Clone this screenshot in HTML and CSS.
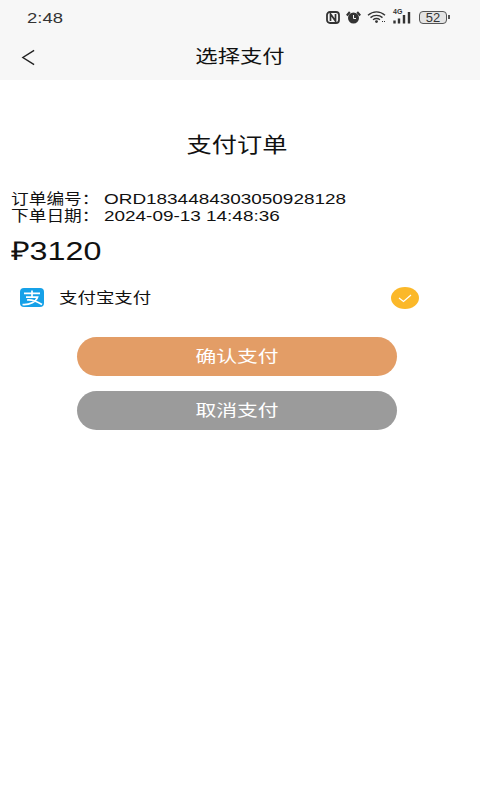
FILE: index.html
```html
<!DOCTYPE html>
<html lang="zh">
<head>
<meta charset="utf-8">
<title>选择支付</title>
<link rel="stylesheet" href="styles.css">
</head>
<body>
<div class="top">
  <div class="status">
    <span class="time wide">2:48</span>
    <div class="status-icons">
      <svg class="i-nfc" viewBox="0 0 14 13"><rect x="1" y="1" width="12" height="11" rx="3" fill="none" stroke="#333" stroke-width="1.800"/><path d="M4.500 10V3L9.500 10V3" fill="none" stroke="#333" stroke-width="1.700"/></svg>
      <svg class="i-alarm" viewBox="0 0 15 13"><circle cx="7.500" cy="7" r="5.500" fill="#333"/><path d="M0.800 4.500L3.800 1M14.200 4.500L11.200 1" stroke="#333" stroke-width="2"/><path d="M7.500 4V7.500H10" stroke="#f7f7f7" stroke-width="1" fill="none"/></svg>
      <svg class="i-wifi" viewBox="0 0 20 12"><path d="M1 4.200C6 -0.300 13 -0.300 18 4.200M3.500 6.600C7 3.600 12 3.600 15.500 6.600M6 8.800C8 7.400 11 7.400 13 8.800" fill="none" stroke="#333" stroke-width="1.400"/><circle cx="9.500" cy="10.600" r="1.400" fill="#333"/><path d="M15 10.500h4" stroke="#333" stroke-width="1.200" stroke-dasharray="1 1"/></svg>
      <span class="net">
        <span class="g4">4G</span>
        <svg class="i-bars" viewBox="0 0 19 13"><path d="M1.500 9.500v3M6 7.500v5M11 4v8.500M16 1v11.500" stroke="#333" stroke-width="2.400"/></svg>
      </span>
      <span class="battery"><span class="level">52</span></span>
      <span class="nub"></span>
    </div>
  </div>
  <header class="nav">
    <svg class="back" viewBox="0 0 16 18"><path d="M14 1.500L2 9L14 16.500" fill="none" stroke="#222" stroke-width="1.500"/></svg>
    <h1 class="nav-title"><span class="wide">选择支付</span></h1>
  </header>
</div>
<main class="content">
  <h2 class="page-title"><span class="wide">支付订单</span></h2>
  <div class="info">
    <div class="info-row"><span class="info-label"><span class="wide">订单编号：</span></span><span class="wide">ORD1834484303050928128</span></div>
    <div class="info-row"><span class="info-label"><span class="wide">下单日期：</span></span><span class="wide">2024-09-13 14:48:36</span></div>
  </div>
  <div class="amount"><span class="wide">₽3120</span></div>
  <div class="method">
    <svg class="alipay" viewBox="0 0 24 19"><rect width="24" height="19" rx="4" fill="#16a1e8"/><path d="M4 5.300H20M12 2.500V9M6 9.200H17.500C16 13.500 10 17 2.500 16.500M7 12C11 11.500 17 13.500 22 16.500" fill="none" stroke="#fff" stroke-width="1.700"/></svg>
    <span class="method-name"><span class="wide">支付宝支付</span></span>
    <svg class="check" viewBox="0 0 28 22"><ellipse cx="14" cy="11" rx="14" ry="11" fill="#fbb829"/><path d="M8 11L12.500 14.500L20 8" fill="none" stroke="#fff" stroke-width="1.200"/></svg>
  </div>
  <div class="actions">
    <button class="btn btn-ok"><span class="wide">确认支付</span></button>
    <button class="btn btn-cancel"><span class="wide">取消支付</span></button>
  </div>
</main>
</body>
</html>
```
FILE: styles.css
```css
* { box-sizing: border-box; }
html, body { margin: 0; padding: 0; }
body {
  width: 480px;
  height: 800px;
  background: #fff;
  color: #111;
  font-family: "Liberation Sans", "Noto Sans CJK SC", sans-serif;
  overflow: hidden;
}
.wide {
  display: inline-block;
  white-space: nowrap;
  transform: scaleX(1.2);
}
.top { background: #f7f7f7; height: 80px; }
.status {
  height: 34px;
  display: flex;
  align-items: center;
  justify-content: space-between;
  padding: 0 30px 0 27px;
}
.time { font-size: 15px; color: #333; transform-origin: left center; transform: scaleX(1.23); }
.status-icons { display: flex; align-items: center; }
.status-icons svg { display: block; }
.i-nfc { width: 14px; height: 13px; margin-right: 6px; }
.i-alarm { width: 15px; height: 13px; margin-right: 6px; }
.i-wifi { width: 20px; height: 12px; margin-right: 6px; }
.net { position: relative; width: 19px; height: 13px; margin-right: 7px; }
.g4 { position: absolute; left: 0; top: -3px; font-size: 7px; font-weight: bold; color: #333; }
.i-bars { width: 19px; height: 13px; }
.battery {
  width: 28px;
  height: 13px;
  border: 1px solid #555;
  border-radius: 4px;
  background: #e4e4e4;
  display: flex;
  align-items: center;
  justify-content: center;
}
.level { font-size: 13px; color: #333; }
.nub { width: 2px; height: 4px; background: #555; margin-left: 1px; }
.nav { position: relative; height: 46px; padding-bottom: 4px; display: flex; align-items: center; justify-content: center; }
.back { position: absolute; left: 21px; top: 14px; width: 15px; height: 19px; }
.nav-title { margin: 0; font-size: 18px; font-weight: normal; }
.nav-title .wide { transform: scaleX(1.24); }
.content { display: flex; flex-direction: column; }
.page-title { margin: 53px 6px 0 0; height: 24px; line-height: 24px; font-size: 21px; font-weight: normal; text-align: center; }
.info { margin: 34px 0 0 11px; font-size: 14.500px; line-height: 17px; }
.info-row { display: flex; height: 17px; }
.info-label { width: 93px; }
.info-row .wide { transform-origin: left center; transform: scaleX(1.305); }
.info-label .wide { transform: scaleX(1.22); }
.amount { margin: 11px 0 0 11px; height: 30px; line-height: 30px; font-size: 26px; }
.amount .wide { transform-origin: left center; transform: scaleX(1.24); }
.method { position: relative; display: flex; align-items: center; height: 22px; margin: 19px 0 0 20px; }
.alipay { width: 24px; height: 19px; margin-top: 3px; }
.method-name { margin-left: 15px; font-size: 15px; }
.method-name .wide { transform-origin: left center; transform: scaleX(1.23); }
.check { position: absolute; left: 371px; top: 2px; width: 28px; height: 22px; }
.actions { display: flex; flex-direction: column; align-items: center; gap: 15px; margin-top: 30px; padding-right: 6px; }
.btn {
  width: 320px;
  height: 39px;
  border: 0;
  border-radius: 20px;
  color: #fff;
  font: inherit;
  font-size: 16px;
  padding: 0 0 3px;
}
.btn .wide { transform: scaleX(1.3); }
.btn-ok { background: #e39d66; }
.btn-cancel { background: #9b9b9b; }
```
